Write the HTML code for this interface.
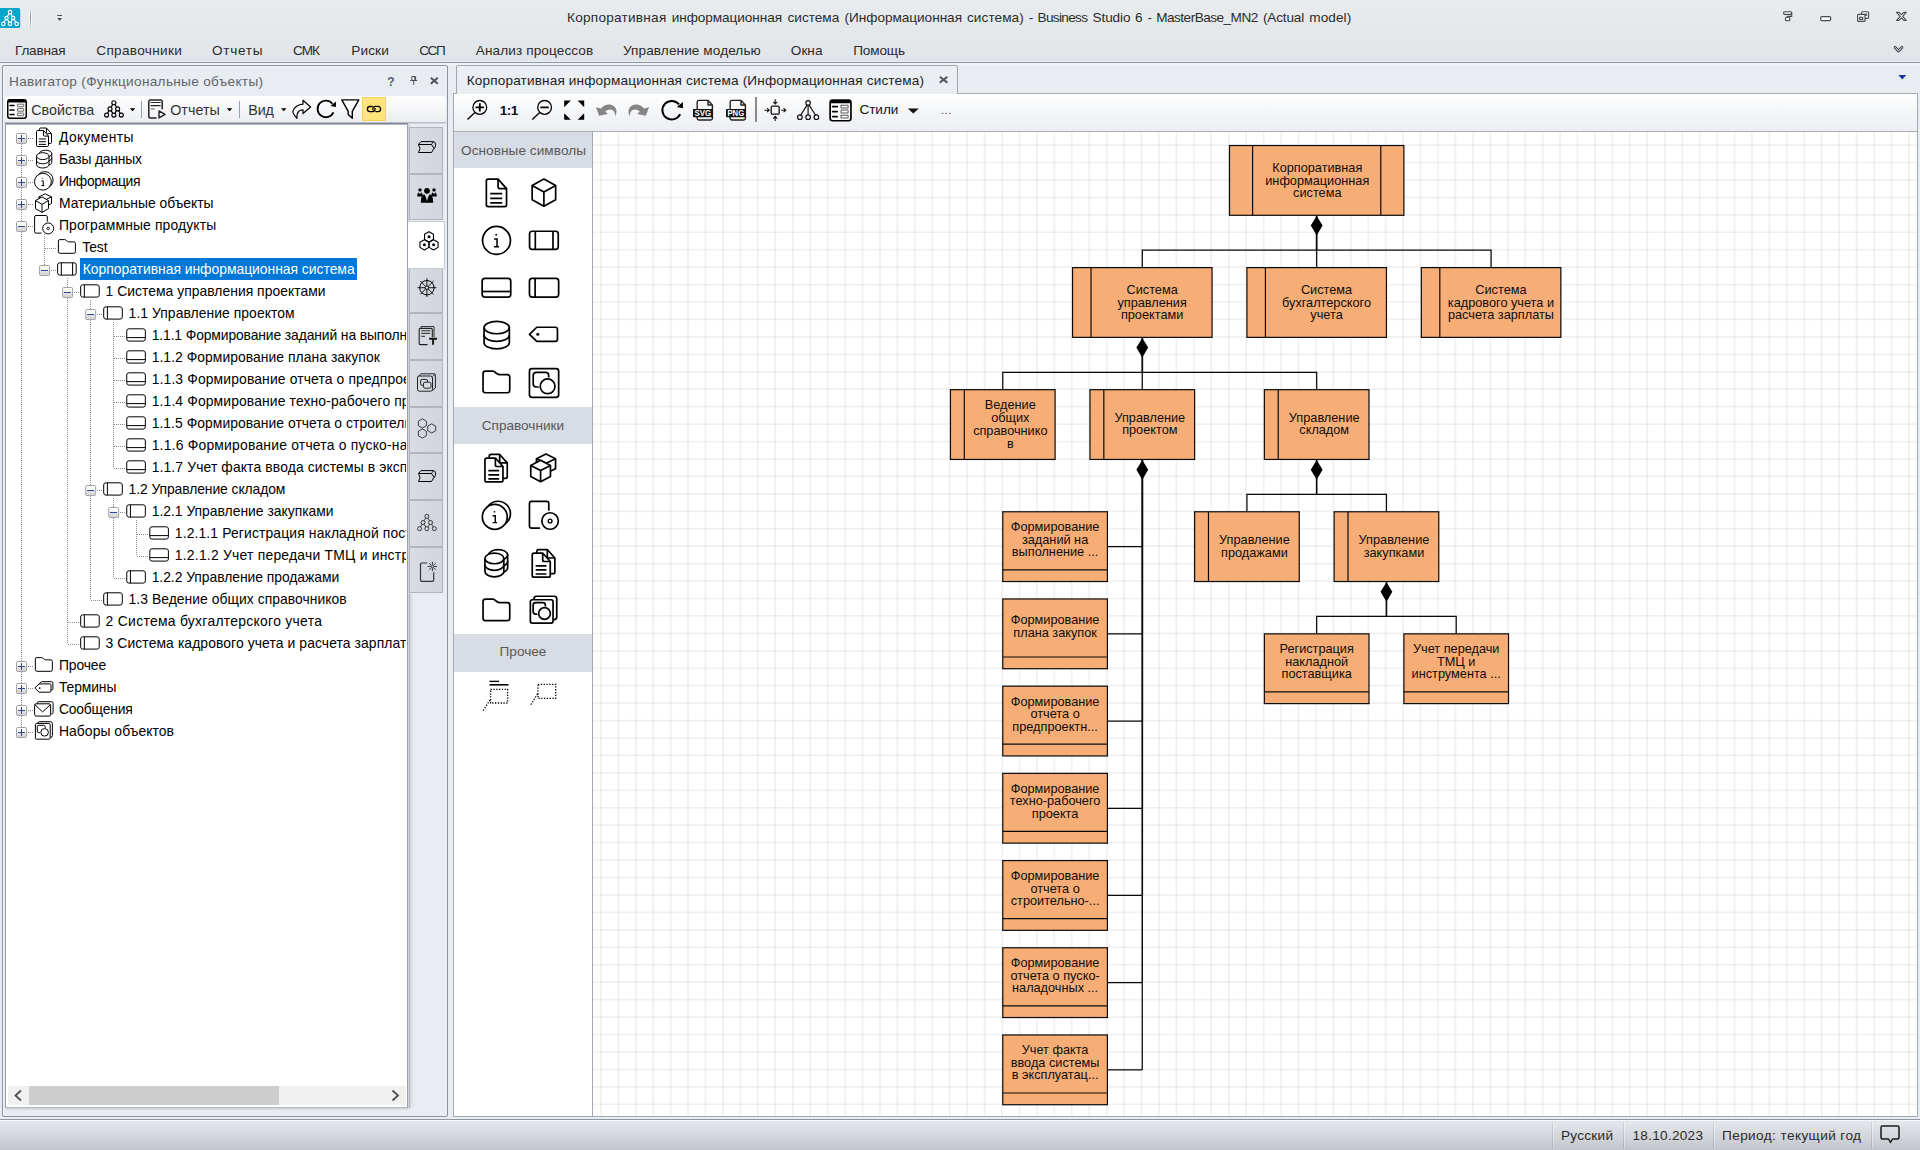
<!DOCTYPE html>
<html lang="ru"><head><meta charset="utf-8"><title>Business Studio</title>
<style>
html,body{margin:0;padding:0}
body{width:1920px;height:1150px;overflow:hidden;position:relative;background:#e9ecf1;font-family:"Liberation Sans",sans-serif;font-size:13.6px;color:#1e1e1e}
body div,body span,body svg{position:absolute;box-sizing:border-box}
span{white-space:pre;line-height:1}
svg{overflow:visible}
.c{overflow:hidden}
</style></head>
<body>
<div style="left:0px;top:0px;width:1920px;height:62px;background:linear-gradient(#e9ecef,#e6e9ec 40%,#e1e4e8)"></div>
<div style="left:0px;top:61px;width:1920px;height:1px;background:#eceff2"></div>
<div style="left:0px;top:62px;width:1920px;height:1px;background:#8d939e"></div>
<div style="left:0px;top:63px;width:1920px;height:2px;background:#f1f4f7"></div>
<svg style="left:0px;top:8px;" width="21" height="20" viewBox="0 0 21 20"><rect x="-3" y="0" width="23.2" height="20" rx="1.8" fill="#05a6cc"/>
<g fill="none" stroke="#fff" stroke-width="1.15">
<path d="M9.2 5.6 L7.3 8.5 M10.8 5.6 L12.4 8.5 M5.7 11.5 L4.1 14.3 M7.4 11.6 L9.2 14.2 M12.3 11.6 L10.8 14.2 M14 11.5 L15.9 14.3"/>
<circle cx="10" cy="4.1" r="1.75"/><circle cx="6.5" cy="10" r="1.65"/><circle cx="13.2" cy="10" r="1.65"/>
<circle cx="3.3" cy="15.8" r="1.75"/><circle cx="10" cy="15.8" r="1.75"/><circle cx="16.7" cy="15.8" r="1.75"/>
</g></svg>
<div style="left:29px;top:7px;width:3px;height:22px;background:linear-gradient(rgba(255,255,255,0),rgba(255,255,255,.8) 50%,rgba(255,255,255,0))"></div>
<div style="left:30px;top:7px;width:1px;height:22px;background:linear-gradient(rgba(140,143,150,0),#8b8e95 45%,#8b8e95 55%,rgba(140,143,150,0))"></div>
<svg style="left:57px;top:15px;" width="6" height="7" viewBox="0 0 6 7"><path d="M0.3 0.5 H5" stroke="#4a4d55" stroke-width="1"/><path d="M0.2 3.1 H5.1 L2.65 5.9 Z" fill="#4a4d55"/></svg>
<span style="left:567.00px;top:11px;letter-spacing:0.249px;color:#2b2b2b;">Корпоративная</span>
<span style="left:671.75px;top:11px;letter-spacing:-0.072px;color:#2b2b2b;">информационная</span>
<span style="left:787.50px;top:11px;letter-spacing:0.003px;color:#2b2b2b;">система</span>
<span style="left:844.50px;top:11px;letter-spacing:-0.028px;color:#2b2b2b;">(Информационная</span>
<span style="left:967.00px;top:11px;letter-spacing:0.069px;color:#2b2b2b;">система)</span>
<span style="left:1028.75px;top:11px;color:#2b2b2b;">-</span>
<span style="left:1037.50px;top:11px;letter-spacing:-0.667px;color:#2b2b2b;">Business</span>
<span style="left:1092.50px;top:11px;letter-spacing:-0.109px;color:#2b2b2b;">Studio</span>
<span style="left:1135.00px;top:11px;color:#2b2b2b;">6</span>
<span style="left:1147.50px;top:11px;color:#2b2b2b;">-</span>
<span style="left:1156.25px;top:11px;letter-spacing:-0.523px;color:#2b2b2b;">MasterBase_MN2</span>
<span style="left:1263.00px;top:11px;letter-spacing:-0.177px;color:#2b2b2b;">(Actual</span>
<span style="left:1309.25px;top:11px;letter-spacing:0.087px;color:#2b2b2b;">model)</span>
<svg style="left:1782px;top:10px;" width="12" height="12" viewBox="0 0 12 12"><g fill="#f6f7f9" stroke="#474b52" stroke-width="1.15"><rect x="1.6" y="1.7" width="8.1" height="2.6" rx="1"/><path d="M9.7 3 V6.4 H5.4 V7.4" fill="none"/><rect x="3.5" y="7.2" width="4.3" height="3.5" rx="1"/></g></svg>
<svg style="left:1819px;top:15px;" width="14" height="7" viewBox="0 0 14 7"><rect x="1.7" y="1.6" width="10" height="4" rx="1.3" fill="#fff" stroke="#474b52" stroke-width="1.2"/></svg>
<svg style="left:1856px;top:10px;" width="14" height="13" viewBox="0 0 14 13"><g fill="#f6f7f9" stroke="#474b52" stroke-width="1.15"><rect x="5.6" y="1.7" width="7" height="6.6" rx="1"/><rect x="9.3" y="4" width="1.4" height="1.3" fill="none" stroke-width="0.9"/><rect x="1.6" y="4.4" width="7.4" height="7" rx="1" fill="#f2f3f6"/><rect x="3.7" y="7.3" width="3" height="2.2" fill="none"/></g></svg>
<svg style="left:1895px;top:11px;" width="13" height="11" viewBox="0 0 13 11"><path d="M1.6 1.3 L3.9 1.3 L6.4 3.7 L8.9 1.3 L11.2 1.3 L7.6 5.3 L11.2 9.3 L8.9 9.3 L6.4 6.9 L3.9 9.3 L1.6 9.3 L5.2 5.3 Z" fill="#fff" stroke="#474b52" stroke-width="1.15" stroke-linejoin="round"/></svg>
<svg style="left:1893px;top:45px;" width="11" height="9" viewBox="0 0 11 9"><path d="M2.2 2.4 L5.5 6 L8.8 2.4" fill="none" stroke="#474b52" stroke-width="2.9" stroke-linejoin="round" stroke-linecap="round"/><path d="M2.3 2.5 L5.5 6 L8.7 2.5" fill="none" stroke="#fff" stroke-width="0.9" stroke-linejoin="round" stroke-linecap="round"/></svg>
<span style="left:15.00px;top:44px;letter-spacing:-0.208px;color:#2b2b2b;">Главная</span>
<span style="left:96.25px;top:44px;letter-spacing:0.314px;color:#2b2b2b;">Справочники</span>
<span style="left:212.00px;top:44px;letter-spacing:0.700px;color:#2b2b2b;">Отчеты</span>
<span style="left:293.00px;top:44px;letter-spacing:-0.961px;color:#2b2b2b;">СМК</span>
<span style="left:351.25px;top:44px;letter-spacing:0.125px;color:#2b2b2b;">Риски</span>
<span style="left:419.25px;top:44px;letter-spacing:-1.453px;color:#2b2b2b;">ССП</span>
<span style="left:475.75px;top:44px;letter-spacing:0.108px;color:#2b2b2b;">Анализ процессов</span>
<span style="left:623.00px;top:44px;letter-spacing:0.091px;color:#2b2b2b;">Управление моделью</span>
<span style="left:790.75px;top:44px;letter-spacing:0.052px;color:#2b2b2b;">Окна</span>
<span style="left:853.25px;top:44px;letter-spacing:-0.153px;color:#2b2b2b;">Помощь</span>
<div style="left:0px;top:1117px;width:1920px;height:2px;background:#e9ecf1"></div>
<div style="left:0px;top:1119px;width:1920px;height:1px;background:#9096a1"></div>
<div style="left:0px;top:1120px;width:1920px;height:1px;background:#f4f7f9"></div>
<div style="left:0px;top:1121px;width:1920px;height:29px;background:linear-gradient(#e4e7eb,#d4d7dc 50%,#c1c4ca)"></div>
<div style="left:1552px;top:1122px;width:1px;height:26px;background:linear-gradient(#d0d3d8,#a9adb4)"></div>
<div style="left:1553px;top:1122px;width:1px;height:26px;background:linear-gradient(#f2f3f5,#dadce0)"></div>
<div style="left:1623px;top:1122px;width:1px;height:26px;background:linear-gradient(#d0d3d8,#a9adb4)"></div>
<div style="left:1624px;top:1122px;width:1px;height:26px;background:linear-gradient(#f2f3f5,#dadce0)"></div>
<div style="left:1713px;top:1122px;width:1px;height:26px;background:linear-gradient(#d0d3d8,#a9adb4)"></div>
<div style="left:1714px;top:1122px;width:1px;height:26px;background:linear-gradient(#f2f3f5,#dadce0)"></div>
<div style="left:1871px;top:1122px;width:1px;height:26px;background:linear-gradient(#d0d3d8,#a9adb4)"></div>
<div style="left:1872px;top:1122px;width:1px;height:26px;background:linear-gradient(#f2f3f5,#dadce0)"></div>
<span style="left:1561.00px;top:1129px;letter-spacing:0.258px;color:#2b2b2b;">Русский</span>
<span style="left:1632.50px;top:1129px;letter-spacing:0.273px;color:#2b2b2b;">18.10.2023</span>
<span style="left:1722.00px;top:1129px;letter-spacing:0.402px;color:#2b2b2b;">Период: текущий год</span>
<svg style="left:1880px;top:1125px;" width="20" height="19" viewBox="0 0 20 19"><path d="M2.5 1 H17.5 Q19 1 19 2.5 V12.5 Q19 14 17.5 14 H12.5 L10.5 17.5 L8.5 14 H2.5 Q1 14 1 12.5 V2.5 Q1 1 2.5 1 Z" fill="none" stroke="#1a1a1a" stroke-width="1.5" stroke-linejoin="round"/></svg>
<div style="left:2px;top:65px;width:446px;height:1052px;border:1px solid #8d939e;border-radius:2px;background:#e9ecf1;box-shadow:inset 1px 1px 0 #f1f4f7"></div>
<span style="left:9.00px;top:75px;letter-spacing:0.321px;color:#5f6570;">Навигатор (Функциональные объекты)</span>
<span style="left:387.30px;top:76px;font-size:12px;color:#5a5f68;font-weight:700;">?</span>
<svg style="left:409.5px;top:76px;" width="8" height="9" viewBox="0 0 8 9"><path d="M1.9 0.5 H5.6 V4.4 M1.9 0.5 V4.4 M0.2 4.5 H7.2 M3.7 4.5 V8.8" fill="none" stroke="#4a4f58" stroke-width="1"/><path d="M4.9 0.8 V4.2" stroke="#4a4f58" stroke-width="1.2"/></svg>
<svg style="left:430px;top:76.5px;" width="9" height="8" viewBox="0 0 9 8"><path d="M0.8 0.8 L7.8 6.8 M7.8 0.8 L0.8 6.8" fill="none" stroke="#4a4f58" stroke-width="1.9"/></svg>
<div style="left:5px;top:96px;width:441px;height:26px;background:linear-gradient(#ffffff,#f6f7f9 45%,#eceef2);border-radius:3px 4px 4px 3px;box-shadow:0 1px 0 #d9dce2"></div>
<span style="left:31.25px;top:103px;font-size:14.3px;letter-spacing:0.031px;color:#333;">Свойства</span>
<div style="left:141px;top:101px;width:1px;height:17px;background:#8d9ec0"></div>
<span style="left:170.20px;top:103px;font-size:14.3px;letter-spacing:0.036px;color:#333;">Отчеты</span>
<div style="left:239px;top:101px;width:1px;height:17px;background:#8d9ec0"></div>
<span style="left:248.30px;top:103px;font-size:14.3px;letter-spacing:-0.137px;color:#333;">Вид</span>
<div style="left:362px;top:97px;width:24px;height:24px;background:#ffe57a;border:1px solid #f3d260"></div>
<div style="left:5px;top:122px;width:441px;height:1px;background:#b9bec7"></div>
<div style="left:5px;top:123px;width:441px;height:1px;background:#d3d7dd"></div>
<div style="left:5px;top:123px;width:403px;height:985px;background:#fff;border:1px solid #9ba1ab;border-top-color:#7f8590;border-left-color:#9aa0aa;border-bottom-color:#b4b9c2;box-shadow:1px 1px 2px rgba(120,125,135,.35),inset 0 1px 0 #b4b9c3"></div>
<div class="c" style="left:6px;top:124px;width:400px;height:962px">
<div style="left:74px;top:134.3px;width:277px;height:21.7px;background:#0078d7"></div>
<span style="left:53.00px;top:7px;font-size:13.9px;letter-spacing:0.349px;color:#000;">Документы</span>
<span style="left:53.00px;top:29px;font-size:13.9px;letter-spacing:-0.200px;color:#000;">Базы данных</span>
<span style="left:53.00px;top:51px;font-size:13.9px;letter-spacing:-0.394px;color:#000;">Информация</span>
<span style="left:53.00px;top:73px;font-size:13.9px;letter-spacing:-0.030px;color:#000;">Материальные объекты</span>
<span style="left:53.00px;top:95px;font-size:13.9px;letter-spacing:0.137px;color:#000;">Программные продукты</span>
<span style="left:76.30px;top:117px;font-size:13.9px;letter-spacing:-0.061px;color:#000;">Test</span>
<span style="left:76.80px;top:139px;font-size:13.9px;letter-spacing:-0.021px;color:#fff;">Корпоративная информационная система</span>
<span style="left:99.60px;top:161px;font-size:13.9px;letter-spacing:0.025px;color:#000;">1 Система управления проектами</span>
<span style="left:122.60px;top:183px;font-size:13.9px;letter-spacing:0.060px;color:#000;">1.1 Управление проектом</span>
<span style="left:145.70px;top:205px;font-size:13.9px;letter-spacing:-0.123px;color:#000;">1.1.1 Формирование заданий на выполнение работ</span>
<span style="left:145.70px;top:227px;font-size:13.9px;letter-spacing:0.045px;color:#000;">1.1.2 Формирование плана закупок</span>
<span style="left:145.70px;top:249px;font-size:13.9px;letter-spacing:0.129px;color:#000;">1.1.3 Формирование отчета о предпроектном обследовании</span>
<span style="left:145.70px;top:271px;font-size:13.9px;letter-spacing:0.127px;color:#000;">1.1.4 Формирование техно-рабочего проекта</span>
<span style="left:145.70px;top:293px;font-size:13.9px;letter-spacing:0.042px;color:#000;">1.1.5 Формирование отчета о строительно-монтажных работах</span>
<span style="left:145.70px;top:315px;font-size:13.9px;letter-spacing:0.211px;color:#000;">1.1.6 Формирование отчета о пуско-наладочных работах</span>
<span style="left:145.70px;top:337px;font-size:13.9px;letter-spacing:0.125px;color:#000;">1.1.7 Учет факта ввода системы в эксплуатацию</span>
<span style="left:122.60px;top:359px;font-size:13.9px;letter-spacing:-0.088px;color:#000;">1.2 Управление складом</span>
<span style="left:145.70px;top:381px;font-size:13.9px;letter-spacing:-0.006px;color:#000;">1.2.1 Управление закупками</span>
<span style="left:168.80px;top:403px;font-size:13.9px;letter-spacing:0.133px;color:#000;">1.2.1.1 Регистрация накладной поставщика</span>
<span style="left:168.80px;top:425px;font-size:13.9px;letter-spacing:0.231px;color:#000;">1.2.1.2 Учет передачи ТМЦ и инструмента</span>
<span style="left:145.70px;top:447px;font-size:13.9px;letter-spacing:-0.046px;color:#000;">1.2.2 Управление продажами</span>
<span style="left:122.60px;top:469px;font-size:13.9px;letter-spacing:0.040px;color:#000;">1.3 Ведение общих справочников</span>
<span style="left:99.60px;top:491px;font-size:13.9px;letter-spacing:0.293px;color:#000;">2 Система бухгалтерского учета</span>
<span style="left:99.60px;top:513px;font-size:13.9px;letter-spacing:0.090px;color:#000;">3 Система кадрового учета и расчета зарплаты</span>
<span style="left:53.00px;top:535px;font-size:13.9px;letter-spacing:-0.126px;color:#000;">Прочее</span>
<span style="left:53.00px;top:557px;font-size:13.9px;letter-spacing:-0.121px;color:#000;">Термины</span>
<span style="left:53.00px;top:579px;font-size:13.9px;letter-spacing:-0.211px;color:#000;">Сообщения</span>
<span style="left:53.00px;top:601px;font-size:13.9px;letter-spacing:0.051px;color:#000;">Наборы объектов</span>
</div>
<div style="left:8px;top:1086px;width:398px;height:19px;background:#f0f0f0"></div>
<div style="left:29px;top:1086px;width:250px;height:19px;background:#cdcdcd"></div>
<div style="left:409px;top:127px;width:34px;height:47px;background:linear-gradient(90deg,#d9dce2,#d2d6dc);border:1px solid #b0b5bf"></div>
<div style="left:409px;top:174px;width:34px;height:46px;background:linear-gradient(90deg,#d9dce2,#d2d6dc);border:1px solid #b0b5bf"></div>
<div style="left:409px;top:267px;width:34px;height:46px;background:linear-gradient(90deg,#d9dce2,#d2d6dc);border:1px solid #b0b5bf"></div>
<div style="left:409px;top:313px;width:34px;height:47px;background:linear-gradient(90deg,#d9dce2,#d2d6dc);border:1px solid #b0b5bf"></div>
<div style="left:409px;top:360px;width:34px;height:47px;background:linear-gradient(90deg,#d9dce2,#d2d6dc);border:1px solid #b0b5bf"></div>
<div style="left:409px;top:407px;width:34px;height:46px;background:linear-gradient(90deg,#d9dce2,#d2d6dc);border:1px solid #b0b5bf"></div>
<div style="left:409px;top:453px;width:34px;height:47px;background:linear-gradient(90deg,#d9dce2,#d2d6dc);border:1px solid #b0b5bf"></div>
<div style="left:409px;top:500px;width:34px;height:47px;background:linear-gradient(90deg,#d9dce2,#d2d6dc);border:1px solid #b0b5bf"></div>
<div style="left:409px;top:547px;width:34px;height:46px;background:linear-gradient(90deg,#d9dce2,#d2d6dc);border:1px solid #b0b5bf"></div>
<div style="left:408px;top:221px;width:37px;height:48px;background:#fff;border:1px solid #c9cdd4;border-left:none"></div>
<div style="left:409px;top:594px;width:1px;height:514px;background:#b4b9c3"></div>
<div style="left:410px;top:594px;width:4px;height:514px;background:linear-gradient(90deg,#d3d7dd,#e9ecf1)"></div>
<div style="left:456px;top:65px;width:502px;height:30px;background:linear-gradient(#eceff3,#e9ecf1);border:1px solid #a0a6b1;border-bottom:none;border-radius:2px 2px 0 0"></div>
<span style="left:466.80px;top:74px;letter-spacing:0.146px;">Корпоративная информационная система (Информационная система)</span>
<svg style="left:939px;top:76px;" width="10" height="8" viewBox="0 0 10 8"><path d="M0.8 0.8 L8.4 6.6 M8.4 0.8 L0.8 6.6" fill="none" stroke="#555a62" stroke-width="2"/></svg>
<svg style="left:1898px;top:75px;" width="9" height="5" viewBox="0 0 9 5"><path d="M0.3 0 H8.3 L4.3 4.6 Z" fill="#1b36a2"/></svg>
<div style="left:453px;top:93px;width:1465px;height:1024px;border:1px solid #a3a9b4;background:#fff"></div>
<div style="left:454px;top:94px;width:1463px;height:37px;background:linear-gradient(#ffffff,#f6f7f9 40%,#eceef2)"></div>
<div style="left:454px;top:131px;width:1463px;height:1px;background:#a9aeb8"></div>
<div style="left:457px;top:93px;width:500px;height:1px;background:#e9ecf1"></div>
<span style="left:499.80px;top:104px;letter-spacing:-0.628px;color:#111;font-weight:700;">1:1</span>
<div style="left:755px;top:97px;width:2px;height:25px;background:#8a8a8a"></div>
<span style="left:859.40px;top:103px;letter-spacing:-0.043px;color:#111;">Стили</span>
<span style="left:941.00px;top:105px;font-size:11px;letter-spacing:0.514px;color:#444;">...</span>
<div style="left:454px;top:132px;width:138px;height:984px;background:#fff"></div>
<div style="left:592px;top:132px;width:1px;height:984px;background:#a3a9b4"></div>
<div style="left:454px;top:132px;width:138px;height:36px;background:#d8dce5"></div>
<span style="left:461.00px;top:144px;letter-spacing:0.064px;color:#585858;">Основные символы</span>
<div style="left:454px;top:407px;width:138px;height:36.5px;background:#d8dce5"></div>
<span style="left:481.80px;top:419px;letter-spacing:-0.016px;color:#585858;">Справочники</span>
<div style="left:454px;top:634px;width:138px;height:37.7px;background:#d8dce5"></div>
<span style="left:499.60px;top:645px;letter-spacing:-0.019px;color:#585858;">Прочее</span>
<svg style="left:0;top:0" width="1920" height="1150" viewBox="0 0 1920 1150"><path d="M600.90 132V1116M618.34 132V1116M635.78 132V1116M653.22 132V1116M670.66 132V1116M688.10 132V1116M705.54 132V1116M722.98 132V1116M740.42 132V1116M757.86 132V1116M775.30 132V1116M792.74 132V1116M810.18 132V1116M827.62 132V1116M845.06 132V1116M862.50 132V1116M879.94 132V1116M897.38 132V1116M914.82 132V1116M932.26 132V1116M949.70 132V1116M967.14 132V1116M984.58 132V1116M1002.02 132V1116M1019.46 132V1116M1036.90 132V1116M1054.34 132V1116M1071.78 132V1116M1089.22 132V1116M1106.66 132V1116M1124.10 132V1116M1141.54 132V1116M1158.98 132V1116M1176.42 132V1116M1193.86 132V1116M1211.30 132V1116M1228.74 132V1116M1246.18 132V1116M1263.62 132V1116M1281.06 132V1116M1298.50 132V1116M1315.94 132V1116M1333.38 132V1116M1350.82 132V1116M1368.26 132V1116M1385.70 132V1116M1403.14 132V1116M1420.58 132V1116M1438.02 132V1116M1455.46 132V1116M1472.90 132V1116M1490.34 132V1116M1507.78 132V1116M1525.22 132V1116M1542.66 132V1116M1560.10 132V1116M1577.54 132V1116M1594.98 132V1116M1612.42 132V1116M1629.86 132V1116M1647.30 132V1116M1664.74 132V1116M1682.18 132V1116M1699.62 132V1116M1717.06 132V1116M1734.50 132V1116M1751.94 132V1116M1769.38 132V1116M1786.82 132V1116M1804.26 132V1116M1821.70 132V1116M1839.14 132V1116M1856.58 132V1116M1874.02 132V1116M1891.46 132V1116M1908.90 132V1116" fill="none" stroke="#000" stroke-opacity=".06" stroke-width="1.7"/><path d="M593 145.06H1917M593 162.50H1917M593 179.94H1917M593 197.38H1917M593 214.82H1917M593 232.26H1917M593 249.70H1917M593 267.14H1917M593 284.58H1917M593 302.02H1917M593 319.46H1917M593 336.90H1917M593 354.34H1917M593 371.78H1917M593 389.22H1917M593 406.66H1917M593 424.10H1917M593 441.54H1917M593 458.98H1917M593 476.42H1917M593 493.86H1917M593 511.30H1917M593 528.74H1917M593 546.18H1917M593 563.62H1917M593 581.06H1917M593 598.50H1917M593 615.94H1917M593 633.38H1917M593 650.82H1917M593 668.26H1917M593 685.70H1917M593 703.14H1917M593 720.58H1917M593 738.02H1917M593 755.46H1917M593 772.90H1917M593 790.34H1917M593 807.78H1917M593 825.22H1917M593 842.66H1917M593 860.10H1917M593 877.54H1917M593 894.98H1917M593 912.42H1917M593 929.86H1917M593 947.30H1917M593 964.74H1917M593 982.18H1917M593 999.62H1917M593 1017.06H1917M593 1034.50H1917M593 1051.94H1917M593 1069.38H1917M593 1086.82H1917M593 1104.26H1917" fill="none" stroke="#000" stroke-opacity=".06" stroke-width="1.7"/><path d="M1316.69 215.29 L1316.69 250.17" fill="none" stroke="#0a0a0a" stroke-width="1.75"/><path d="M1316.69 250.17 L1316.69 267.61" fill="none" stroke="#0a0a0a" stroke-width="1.25"/><path d="M1142.29 267.61 L1142.29 250.17 L1491.09 250.17 L1491.09 267.61" fill="none" stroke="#0a0a0a" stroke-width="1.25"/><path d="M1142.29 337.37 L1142.29 372.25" fill="none" stroke="#0a0a0a" stroke-width="1.75"/><path d="M1142.29 372.25 L1142.29 389.69" fill="none" stroke="#0a0a0a" stroke-width="1.25"/><path d="M1002.77 389.69 L1002.77 372.25 L1316.69 372.25 L1316.69 389.69" fill="none" stroke="#0a0a0a" stroke-width="1.25"/><path d="M1142.29 459.45 L1142.29 546.65" fill="none" stroke="#0a0a0a" stroke-width="2.0"/><path d="M1142.29 546.65 L1142.29 633.85" fill="none" stroke="#0a0a0a" stroke-width="1.9"/><path d="M1142.29 633.85 L1142.29 721.05" fill="none" stroke="#0a0a0a" stroke-width="1.8"/><path d="M1142.29 721.05 L1142.29 808.25" fill="none" stroke="#0a0a0a" stroke-width="1.7"/><path d="M1142.29 808.25 L1142.29 895.45" fill="none" stroke="#0a0a0a" stroke-width="1.6"/><path d="M1142.29 895.45 L1142.29 982.65" fill="none" stroke="#0a0a0a" stroke-width="1.45"/><path d="M1142.29 982.65 L1142.29 1069.85" fill="none" stroke="#0a0a0a" stroke-width="1.25"/><path d="M1107.41 546.65 L1142.29 546.65" fill="none" stroke="#0a0a0a" stroke-width="1.25"/><path d="M1107.41 633.85 L1142.29 633.85" fill="none" stroke="#0a0a0a" stroke-width="1.25"/><path d="M1107.41 721.05 L1142.29 721.05" fill="none" stroke="#0a0a0a" stroke-width="1.25"/><path d="M1107.41 808.25 L1142.29 808.25" fill="none" stroke="#0a0a0a" stroke-width="1.25"/><path d="M1107.41 895.45 L1142.29 895.45" fill="none" stroke="#0a0a0a" stroke-width="1.25"/><path d="M1107.41 982.65 L1142.29 982.65" fill="none" stroke="#0a0a0a" stroke-width="1.25"/><path d="M1107.41 1069.85 L1142.29 1069.85" fill="none" stroke="#0a0a0a" stroke-width="1.25"/><path d="M1316.69 459.45 L1316.69 494.33" fill="none" stroke="#0a0a0a" stroke-width="1.6"/><path d="M1246.93 511.77 L1246.93 494.33 L1386.45 494.33 L1386.45 511.77" fill="none" stroke="#0a0a0a" stroke-width="1.25"/><path d="M1386.45 581.53 L1386.45 616.41" fill="none" stroke="#0a0a0a" stroke-width="1.6"/><path d="M1316.69 633.85 L1316.69 616.41 L1456.21 616.41 L1456.21 633.85" fill="none" stroke="#0a0a0a" stroke-width="1.25"/><rect x="1229.49" y="145.53" width="174.40" height="69.76" fill="#f7ae76" stroke="#0a0a0a" stroke-width="1.2"/><path d="M1252.60 145.53V215.29" stroke="#0a0a0a" stroke-width="1.2"/><path d="M1380.78 145.53V215.29" stroke="#0a0a0a" stroke-width="1.2"/><rect x="1072.53" y="267.61" width="139.52" height="69.76" fill="#f7ae76" stroke="#0a0a0a" stroke-width="1.2"/><path d="M1091.02 267.61V337.37" stroke="#0a0a0a" stroke-width="1.2"/><rect x="1246.93" y="267.61" width="139.52" height="69.76" fill="#f7ae76" stroke="#0a0a0a" stroke-width="1.2"/><path d="M1265.42 267.61V337.37" stroke="#0a0a0a" stroke-width="1.2"/><rect x="1421.33" y="267.61" width="139.52" height="69.76" fill="#f7ae76" stroke="#0a0a0a" stroke-width="1.2"/><path d="M1439.82 267.61V337.37" stroke="#0a0a0a" stroke-width="1.2"/><rect x="950.45" y="389.69" width="104.64" height="69.76" fill="#f7ae76" stroke="#0a0a0a" stroke-width="1.2"/><path d="M964.31 389.69V459.45" stroke="#0a0a0a" stroke-width="1.2"/><rect x="1089.97" y="389.69" width="104.64" height="69.76" fill="#f7ae76" stroke="#0a0a0a" stroke-width="1.2"/><path d="M1103.83 389.69V459.45" stroke="#0a0a0a" stroke-width="1.2"/><rect x="1264.37" y="389.69" width="104.64" height="69.76" fill="#f7ae76" stroke="#0a0a0a" stroke-width="1.2"/><path d="M1278.23 389.69V459.45" stroke="#0a0a0a" stroke-width="1.2"/><rect x="1002.77" y="511.77" width="104.64" height="69.76" fill="#f7ae76" stroke="#0a0a0a" stroke-width="1.2"/><path d="M1002.77 569.81H1107.41" stroke="#0a0a0a" stroke-width="1.2"/><rect x="1002.77" y="598.97" width="104.64" height="69.76" fill="#f7ae76" stroke="#0a0a0a" stroke-width="1.2"/><path d="M1002.77 657.01H1107.41" stroke="#0a0a0a" stroke-width="1.2"/><rect x="1002.77" y="686.17" width="104.64" height="69.76" fill="#f7ae76" stroke="#0a0a0a" stroke-width="1.2"/><path d="M1002.77 744.21H1107.41" stroke="#0a0a0a" stroke-width="1.2"/><rect x="1002.77" y="773.37" width="104.64" height="69.76" fill="#f7ae76" stroke="#0a0a0a" stroke-width="1.2"/><path d="M1002.77 831.41H1107.41" stroke="#0a0a0a" stroke-width="1.2"/><rect x="1002.77" y="860.57" width="104.64" height="69.76" fill="#f7ae76" stroke="#0a0a0a" stroke-width="1.2"/><path d="M1002.77 918.61H1107.41" stroke="#0a0a0a" stroke-width="1.2"/><rect x="1002.77" y="947.77" width="104.64" height="69.76" fill="#f7ae76" stroke="#0a0a0a" stroke-width="1.2"/><path d="M1002.77 1005.81H1107.41" stroke="#0a0a0a" stroke-width="1.2"/><rect x="1002.77" y="1034.97" width="104.64" height="69.76" fill="#f7ae76" stroke="#0a0a0a" stroke-width="1.2"/><path d="M1002.77 1093.01H1107.41" stroke="#0a0a0a" stroke-width="1.2"/><rect x="1194.61" y="511.77" width="104.64" height="69.76" fill="#f7ae76" stroke="#0a0a0a" stroke-width="1.2"/><path d="M1208.47 511.77V581.53" stroke="#0a0a0a" stroke-width="1.2"/><rect x="1334.13" y="511.77" width="104.64" height="69.76" fill="#f7ae76" stroke="#0a0a0a" stroke-width="1.2"/><path d="M1347.99 511.77V581.53" stroke="#0a0a0a" stroke-width="1.2"/><rect x="1264.37" y="633.85" width="104.64" height="69.76" fill="#f7ae76" stroke="#0a0a0a" stroke-width="1.2"/><path d="M1264.37 691.89H1369.01" stroke="#0a0a0a" stroke-width="1.2"/><rect x="1403.89" y="633.85" width="104.64" height="69.76" fill="#f7ae76" stroke="#0a0a0a" stroke-width="1.2"/><path d="M1403.89 691.89H1508.53" stroke="#0a0a0a" stroke-width="1.2"/><path d="M1316.69 215.89L1322.59 225.49L1316.69 235.49L1310.79 225.49Z" fill="#000"/><path d="M1142.29 337.97L1148.19 347.57L1142.29 357.57L1136.39 347.57Z" fill="#000"/><path d="M1142.29 460.05L1148.19 469.65L1142.29 479.65L1136.39 469.65Z" fill="#000"/><path d="M1316.69 460.05L1322.59 469.65L1316.69 479.65L1310.79 469.65Z" fill="#000"/><path d="M1386.45 582.13L1392.35 591.73L1386.45 601.73L1380.55 591.73Z" fill="#000"/></svg>
<span style="left:1272.26px;top:162px;font-size:12.72px;color:#0d0d0d;">Корпоративная</span>
<span style="left:1265.27px;top:175px;font-size:12.72px;color:#0d0d0d;">информационная</span>
<span style="left:1293.09px;top:187px;font-size:12.72px;color:#0d0d0d;">система</span>
<span style="left:1126.52px;top:284px;font-size:12.72px;color:#0d0d0d;">Система</span>
<span style="left:1117.45px;top:297px;font-size:12.72px;color:#0d0d0d;">управления</span>
<span style="left:1120.92px;top:309px;font-size:12.72px;color:#0d0d0d;">проектами</span>
<span style="left:1300.92px;top:284px;font-size:12.72px;color:#0d0d0d;">Система</span>
<span style="left:1282.04px;top:297px;font-size:12.72px;color:#0d0d0d;">бухгалтерского</span>
<span style="left:1310.33px;top:309px;font-size:12.72px;color:#0d0d0d;">учета</span>
<span style="left:1475.32px;top:284px;font-size:12.72px;color:#0d0d0d;">Система</span>
<span style="left:1447.85px;top:297px;font-size:12.72px;color:#0d0d0d;">кадрового учета и</span>
<span style="left:1447.94px;top:309px;font-size:12.72px;color:#0d0d0d;">расчета зарплаты</span>
<span style="left:984.81px;top:399px;font-size:12.72px;color:#0d0d0d;">Ведение</span>
<span style="left:991.15px;top:412px;font-size:12.72px;color:#0d0d0d;">общих</span>
<span style="left:973.13px;top:425px;font-size:12.72px;color:#0d0d0d;">справочнико</span>
<span style="left:1006.92px;top:438px;font-size:12.72px;color:#0d0d0d;">в</span>
<span style="left:1114.46px;top:412px;font-size:12.72px;color:#0d0d0d;">Управление</span>
<span style="left:1122.16px;top:424px;font-size:12.72px;color:#0d0d0d;">проектом</span>
<span style="left:1288.86px;top:412px;font-size:12.72px;color:#0d0d0d;">Управление</span>
<span style="left:1299.32px;top:424px;font-size:12.72px;color:#0d0d0d;">складом</span>
<span style="left:1010.74px;top:521px;font-size:12.72px;color:#0d0d0d;">Формирование</span>
<span style="left:1021.96px;top:534px;font-size:12.72px;color:#0d0d0d;">заданий на</span>
<span style="left:1011.87px;top:546px;font-size:12.72px;color:#0d0d0d;">выполнение ...</span>
<span style="left:1010.74px;top:614px;font-size:12.72px;color:#0d0d0d;">Формирование</span>
<span style="left:1013.33px;top:627px;font-size:12.72px;color:#0d0d0d;">плана закупок</span>
<span style="left:1010.74px;top:696px;font-size:12.72px;color:#0d0d0d;">Формирование</span>
<span style="left:1030.46px;top:708px;font-size:12.72px;color:#0d0d0d;">отчета о</span>
<span style="left:1012.36px;top:721px;font-size:12.72px;color:#0d0d0d;">предпроектн...</span>
<span style="left:1010.74px;top:783px;font-size:12.72px;color:#0d0d0d;">Формирование</span>
<span style="left:1009.82px;top:795px;font-size:12.72px;color:#0d0d0d;">техно-рабочего</span>
<span style="left:1031.80px;top:808px;font-size:12.72px;color:#0d0d0d;">проекта</span>
<span style="left:1010.74px;top:870px;font-size:12.72px;color:#0d0d0d;">Формирование</span>
<span style="left:1030.46px;top:883px;font-size:12.72px;color:#0d0d0d;">отчета о</span>
<span style="left:1010.71px;top:895px;font-size:12.72px;color:#0d0d0d;">строительно-...</span>
<span style="left:1010.74px;top:957px;font-size:12.72px;color:#0d0d0d;">Формирование</span>
<span style="left:1010.45px;top:970px;font-size:12.72px;color:#0d0d0d;">отчета о пуско-</span>
<span style="left:1012.04px;top:982px;font-size:12.72px;color:#0d0d0d;">наладочных ...</span>
<span style="left:1021.73px;top:1044px;font-size:12.72px;color:#0d0d0d;">Учет факта</span>
<span style="left:1010.75px;top:1057px;font-size:12.72px;color:#0d0d0d;">ввода системы</span>
<span style="left:1011.68px;top:1069px;font-size:12.72px;color:#0d0d0d;">в эксплуатац...</span>
<span style="left:1219.10px;top:534px;font-size:12.72px;color:#0d0d0d;">Управление</span>
<span style="left:1221.12px;top:547px;font-size:12.72px;color:#0d0d0d;">продажами</span>
<span style="left:1358.62px;top:534px;font-size:12.72px;color:#0d0d0d;">Управление</span>
<span style="left:1363.66px;top:547px;font-size:12.72px;color:#0d0d0d;">закупками</span>
<span style="left:1279.51px;top:643px;font-size:12.72px;color:#0d0d0d;">Регистрация</span>
<span style="left:1285.22px;top:656px;font-size:12.72px;color:#0d0d0d;">накладной</span>
<span style="left:1281.53px;top:668px;font-size:12.72px;color:#0d0d0d;">поставщика</span>
<span style="left:1412.96px;top:643px;font-size:12.72px;color:#0d0d0d;">Учет передачи</span>
<span style="left:1437.00px;top:656px;font-size:12.72px;color:#0d0d0d;">ТМЦ и</span>
<span style="left:1411.61px;top:668px;font-size:12.72px;color:#0d0d0d;">инструмента ...</span>
<svg style="left:0;top:0" width="1920" height="1150" viewBox="0 0 1920 1150"><rect x="7.75" y="99.75" width="18.5" height="18.5" rx="2.2" fill="#fdfdfd" stroke="#000" stroke-width="1.5"/><path d="M8 102.6 V101.6 Q8 99.6 10 99.6 H24 Q26 99.6 26 101.6 V102.6 Z" fill="#000" stroke="#000" stroke-width="0" /><path d="M10 105.5 H14" fill="none" stroke="#000" stroke-width="1.5" stroke-linecap="round"/><rect x="17.4" y="104.2" width="6.3" height="2.6" rx="0.3" fill="#fff" stroke="#555" stroke-width="0.9"/><path d="M10 109.9 H14" fill="none" stroke="#000" stroke-width="1.5" stroke-linecap="round"/><rect x="17.4" y="108.6" width="6.3" height="2.6" rx="0.3" fill="#fff" stroke="#555" stroke-width="0.9"/><path d="M10 114.4 H14" fill="none" stroke="#000" stroke-width="1.5" stroke-linecap="round"/><rect x="17.4" y="113.1" width="6.3" height="2.6" rx="0.3" fill="#fff" stroke="#555" stroke-width="0.9"/><path d="M112.79 104.4 L111.06 107.2 M114.89 104.41 L116.56 107.19 M109.04 110.65 L107.56 113.35 M111.06 110.6 L112.79 113.4 M116.56 110.61 L114.89 113.39 M118.62 110.62 L120.28 113.38" fill="none" stroke="#000" stroke-width="1.15" /><circle cx="113.85" cy="102.7" r="2" fill="none" stroke="#000" stroke-width="1.15"/><circle cx="110" cy="108.9" r="2" fill="none" stroke="#000" stroke-width="1.15"/><circle cx="117.6" cy="108.9" r="2" fill="none" stroke="#000" stroke-width="1.15"/><circle cx="106.6" cy="115.1" r="2" fill="none" stroke="#000" stroke-width="1.15"/><circle cx="113.85" cy="115.1" r="2" fill="none" stroke="#000" stroke-width="1.15"/><circle cx="121.3" cy="115.1" r="2" fill="none" stroke="#000" stroke-width="1.15"/><path d="M129.8 108.2 H135.3 L132.55 111.2 Z" fill="#000" stroke="#000" stroke-width="0" /><path d="M162.2 108.8 V101.6 Q162.2 100.1 160.7 100.1 H150.3 Q148.8 100.1 148.8 101.6 V116.4 Q148.8 117.9 150.3 117.9 H156" fill="none" stroke="#222" stroke-width="1.5" stroke-linecap="round"/><path d="M150.6 102.5 H160.6 M150.6 105.6 H160.6" fill="none" stroke="#222" stroke-width="1.2" /><path d="M150.6 108.9 H154.8" fill="none" stroke="#777" stroke-width="1.2" /><path d="M159 110.9 L165 114.4 L159 117.9 Z" fill="none" stroke="#222" stroke-width="1.4" stroke-linejoin="round"/><path d="M226.8 108.2 H232.3 L229.55 111.2 Z" fill="#000" stroke="#000" stroke-width="0" /><path d="M281 108.2 H286.5 L283.75 111.2 Z" fill="#000" stroke="#000" stroke-width="0" /><path d="M303 104.2 V100.3 L310.6 107 L303 113.5 V109.9 C299.5 109.9 296.6 111.6 297 118.3 C294 115.3 292.6 112.8 293 111.2 C294 107.3 298.2 104.4 303 104.2 Z" fill="none" stroke="#000" stroke-width="1.2" stroke-linejoin="round"/><path d="M332.44 103.79 A8.3 8.3 0 1 0 333.42 112.41" fill="none" stroke="#000" stroke-width="1.8" /><path d="M335.91 101.57 L335.91 107.07 L330.51 106.01 Z" fill="#000" stroke="#000" stroke-width="0" /><path d="M341.8 99.9 H358.8 L352.3 111.3 V118.3 L348.2 114.6 V111.3 Z" fill="none" stroke="#000" stroke-width="1.4" stroke-linejoin="round"/><path d="M372.2 106.5 H370 A2.6 2.6 0 0 0 370 111.7 H372.6 A2.6 2.6 0 0 0 375 108.3 M375.8 111.6 H378 A2.6 2.6 0 0 0 378 106.4 H375.4 A2.6 2.6 0 0 0 373 109.8" fill="none" stroke="#000" stroke-width="1.3" stroke-linecap="round"/><path d="M21.5 137.5 V732" fill="none" stroke="#8c8c8c" stroke-width="1" stroke-dasharray="1 1" shape-rendering="crispEdges"/><path d="M44.55 233.5 V270" fill="none" stroke="#8c8c8c" stroke-width="1" stroke-dasharray="1 1" shape-rendering="crispEdges"/><path d="M67.6 277.5 V644" fill="none" stroke="#8c8c8c" stroke-width="1" stroke-dasharray="1 1" shape-rendering="crispEdges"/><path d="M90.65 299.5 V600" fill="none" stroke="#8c8c8c" stroke-width="1" stroke-dasharray="1 1" shape-rendering="crispEdges"/><path d="M113.7 321.5 V468" fill="none" stroke="#8c8c8c" stroke-width="1" stroke-dasharray="1 1" shape-rendering="crispEdges"/><path d="M113.7 497.5 V578" fill="none" stroke="#8c8c8c" stroke-width="1" stroke-dasharray="1 1" shape-rendering="crispEdges"/><path d="M136.75 519.5 V556" fill="none" stroke="#8c8c8c" stroke-width="1" stroke-dasharray="1 1" shape-rendering="crispEdges"/><path d="M27.5 138 H33" fill="none" stroke="#8c8c8c" stroke-width="1" stroke-dasharray="1 1" shape-rendering="crispEdges"/><path d="M27.5 160 H33" fill="none" stroke="#8c8c8c" stroke-width="1" stroke-dasharray="1 1" shape-rendering="crispEdges"/><path d="M27.5 182 H33" fill="none" stroke="#8c8c8c" stroke-width="1" stroke-dasharray="1 1" shape-rendering="crispEdges"/><path d="M27.5 204 H33" fill="none" stroke="#8c8c8c" stroke-width="1" stroke-dasharray="1 1" shape-rendering="crispEdges"/><path d="M27.5 226 H33" fill="none" stroke="#8c8c8c" stroke-width="1" stroke-dasharray="1 1" shape-rendering="crispEdges"/><path d="M44.55 248 H56.05" fill="none" stroke="#8c8c8c" stroke-width="1" stroke-dasharray="1 1" shape-rendering="crispEdges"/><path d="M50.55 270 H56.05" fill="none" stroke="#8c8c8c" stroke-width="1" stroke-dasharray="1 1" shape-rendering="crispEdges"/><path d="M73.6 292 H79.1" fill="none" stroke="#8c8c8c" stroke-width="1" stroke-dasharray="1 1" shape-rendering="crispEdges"/><path d="M96.65 314 H102.15" fill="none" stroke="#8c8c8c" stroke-width="1" stroke-dasharray="1 1" shape-rendering="crispEdges"/><path d="M113.7 336 H125.2" fill="none" stroke="#8c8c8c" stroke-width="1" stroke-dasharray="1 1" shape-rendering="crispEdges"/><path d="M113.7 358 H125.2" fill="none" stroke="#8c8c8c" stroke-width="1" stroke-dasharray="1 1" shape-rendering="crispEdges"/><path d="M113.7 380 H125.2" fill="none" stroke="#8c8c8c" stroke-width="1" stroke-dasharray="1 1" shape-rendering="crispEdges"/><path d="M113.7 402 H125.2" fill="none" stroke="#8c8c8c" stroke-width="1" stroke-dasharray="1 1" shape-rendering="crispEdges"/><path d="M113.7 424 H125.2" fill="none" stroke="#8c8c8c" stroke-width="1" stroke-dasharray="1 1" shape-rendering="crispEdges"/><path d="M113.7 446 H125.2" fill="none" stroke="#8c8c8c" stroke-width="1" stroke-dasharray="1 1" shape-rendering="crispEdges"/><path d="M113.7 468 H125.2" fill="none" stroke="#8c8c8c" stroke-width="1" stroke-dasharray="1 1" shape-rendering="crispEdges"/><path d="M96.65 490 H102.15" fill="none" stroke="#8c8c8c" stroke-width="1" stroke-dasharray="1 1" shape-rendering="crispEdges"/><path d="M119.7 512 H125.2" fill="none" stroke="#8c8c8c" stroke-width="1" stroke-dasharray="1 1" shape-rendering="crispEdges"/><path d="M136.75 534 H148.25" fill="none" stroke="#8c8c8c" stroke-width="1" stroke-dasharray="1 1" shape-rendering="crispEdges"/><path d="M136.75 556 H148.25" fill="none" stroke="#8c8c8c" stroke-width="1" stroke-dasharray="1 1" shape-rendering="crispEdges"/><path d="M113.7 578 H125.2" fill="none" stroke="#8c8c8c" stroke-width="1" stroke-dasharray="1 1" shape-rendering="crispEdges"/><path d="M90.65 600 H102.15" fill="none" stroke="#8c8c8c" stroke-width="1" stroke-dasharray="1 1" shape-rendering="crispEdges"/><path d="M67.6 622 H79.1" fill="none" stroke="#8c8c8c" stroke-width="1" stroke-dasharray="1 1" shape-rendering="crispEdges"/><path d="M67.6 644 H79.1" fill="none" stroke="#8c8c8c" stroke-width="1" stroke-dasharray="1 1" shape-rendering="crispEdges"/><path d="M27.5 666 H33" fill="none" stroke="#8c8c8c" stroke-width="1" stroke-dasharray="1 1" shape-rendering="crispEdges"/><path d="M27.5 688 H33" fill="none" stroke="#8c8c8c" stroke-width="1" stroke-dasharray="1 1" shape-rendering="crispEdges"/><path d="M27.5 710 H33" fill="none" stroke="#8c8c8c" stroke-width="1" stroke-dasharray="1 1" shape-rendering="crispEdges"/><path d="M27.5 732 H33" fill="none" stroke="#8c8c8c" stroke-width="1" stroke-dasharray="1 1" shape-rendering="crispEdges"/><defs><linearGradient id="exg" x1="0" y1="0" x2="0" y2="1"><stop offset="0" stop-color="#ffffff"/><stop offset="0.5" stop-color="#f4f4f4"/><stop offset="0.55" stop-color="#e2e2e2"/><stop offset="1" stop-color="#d2d2d2"/></linearGradient></defs><rect x="16.5" y="133.5" width="10" height="10" rx="1.2" fill="url(#exg)" stroke="#a3a3a3" stroke-width="1"/><path d="M18 138.5 H25 M21.5 135 V142" fill="none" stroke="#33478f" stroke-width="1" shape-rendering="crispEdges"/><rect x="16.5" y="155.5" width="10" height="10" rx="1.2" fill="url(#exg)" stroke="#a3a3a3" stroke-width="1"/><path d="M18 160.5 H25 M21.5 157 V164" fill="none" stroke="#33478f" stroke-width="1" shape-rendering="crispEdges"/><rect x="16.5" y="177.5" width="10" height="10" rx="1.2" fill="url(#exg)" stroke="#a3a3a3" stroke-width="1"/><path d="M18 182.5 H25 M21.5 179 V186" fill="none" stroke="#33478f" stroke-width="1" shape-rendering="crispEdges"/><rect x="16.5" y="199.5" width="10" height="10" rx="1.2" fill="url(#exg)" stroke="#a3a3a3" stroke-width="1"/><path d="M18 204.5 H25 M21.5 201 V208" fill="none" stroke="#33478f" stroke-width="1" shape-rendering="crispEdges"/><rect x="16.5" y="221.5" width="10" height="10" rx="1.2" fill="url(#exg)" stroke="#a3a3a3" stroke-width="1"/><path d="M18 226.5 H25" fill="none" stroke="#33478f" stroke-width="1" shape-rendering="crispEdges"/><rect x="39.55" y="265.5" width="10" height="10" rx="1.2" fill="url(#exg)" stroke="#a3a3a3" stroke-width="1"/><path d="M41.05 270.5 H48.05" fill="none" stroke="#33478f" stroke-width="1" shape-rendering="crispEdges"/><rect x="62.6" y="287.5" width="10" height="10" rx="1.2" fill="url(#exg)" stroke="#a3a3a3" stroke-width="1"/><path d="M64.1 292.5 H71.1" fill="none" stroke="#33478f" stroke-width="1" shape-rendering="crispEdges"/><rect x="85.65" y="309.5" width="10" height="10" rx="1.2" fill="url(#exg)" stroke="#a3a3a3" stroke-width="1"/><path d="M87.15 314.5 H94.15" fill="none" stroke="#33478f" stroke-width="1" shape-rendering="crispEdges"/><rect x="85.65" y="485.5" width="10" height="10" rx="1.2" fill="url(#exg)" stroke="#a3a3a3" stroke-width="1"/><path d="M87.15 490.5 H94.15" fill="none" stroke="#33478f" stroke-width="1" shape-rendering="crispEdges"/><rect x="108.7" y="507.5" width="10" height="10" rx="1.2" fill="url(#exg)" stroke="#a3a3a3" stroke-width="1"/><path d="M110.2 512.5 H117.2" fill="none" stroke="#33478f" stroke-width="1" shape-rendering="crispEdges"/><rect x="16.5" y="661.5" width="10" height="10" rx="1.2" fill="url(#exg)" stroke="#a3a3a3" stroke-width="1"/><path d="M18 666.5 H25 M21.5 663 V670" fill="none" stroke="#33478f" stroke-width="1" shape-rendering="crispEdges"/><rect x="16.5" y="683.5" width="10" height="10" rx="1.2" fill="url(#exg)" stroke="#a3a3a3" stroke-width="1"/><path d="M18 688.5 H25 M21.5 685 V692" fill="none" stroke="#33478f" stroke-width="1" shape-rendering="crispEdges"/><rect x="16.5" y="705.5" width="10" height="10" rx="1.2" fill="url(#exg)" stroke="#a3a3a3" stroke-width="1"/><path d="M18 710.5 H25 M21.5 707 V714" fill="none" stroke="#33478f" stroke-width="1" shape-rendering="crispEdges"/><rect x="16.5" y="727.5" width="10" height="10" rx="1.2" fill="url(#exg)" stroke="#a3a3a3" stroke-width="1"/><path d="M18 732.5 H25 M21.5 729 V736" fill="none" stroke="#33478f" stroke-width="1" shape-rendering="crispEdges"/><path d="M40.67 128 H46.46 L51.5 133.64 V142.33 Q51.5 143.5 50.33 143.5 H40.67 Q39.5 143.5 39.5 142.33 V129.17 Q39.5 128 40.67 128 Z" fill="none" stroke="#000" stroke-width="1.0" stroke-linejoin="round"/><path d="M46.46 128 V132.47 Q46.46 133.64 47.63 133.64 H51.5" fill="none" stroke="#000" stroke-width="1.0" /><path d="M37.67 130.5 H43.46 L48.5 136.14 V145.33 Q48.5 146.5 47.33 146.5 H37.67 Q36.5 146.5 36.5 145.33 V131.67 Q36.5 130.5 37.67 130.5 Z" fill="#fff" stroke="#000" stroke-width="1.0" stroke-linejoin="round"/><path d="M43.46 130.5 V134.97 Q43.46 136.14 44.63 136.14 H48.5" fill="none" stroke="#000" stroke-width="1.0" /><path d="M38.8 138.96 H45.95 M38.8 141.68 H45.95 M38.8 144.37 H45.95" fill="none" stroke="#000" stroke-width="1.0" /><path d="M39.3 153.69 V162.21 A6.25 3.49 0 0 0 51.8 162.21 V153.69" fill="none" stroke="#000" stroke-width="1.0" /><ellipse cx="45.55" cy="153.69" rx="6.25" ry="3.49" fill="none" stroke="#000" stroke-width="1.0"/><path d="M39.3 157.95 A6.25 3.49 0 0 0 51.8 157.95" fill="none" stroke="#000" stroke-width="1.0" /><path d="M36.5 156.14 V164.56 A6.25 3.44 0 0 0 49 164.56 V156.14" fill="#fff" stroke="#000" stroke-width="1.0" /><ellipse cx="42.75" cy="156.14" rx="6.25" ry="3.44" fill="#fff" stroke="#000" stroke-width="1.0"/><path d="M36.5 160.35 A6.25 3.44 0 0 0 49 160.35" fill="none" stroke="#000" stroke-width="1.0" /><circle cx="44.7" cy="180" r="8.4" fill="none" stroke="#000" stroke-width="1.0"/><circle cx="42.9" cy="181.7" r="8.4" fill="#fff" stroke="#000" stroke-width="1.0"/><circle cx="42.71" cy="178.25" r="0.56" fill="#000" stroke="#000" stroke-width="0"/><path d="M41.46 180.89 H43.21 V185.46 M41.4 185.52 H44.4" fill="none" stroke="#000" stroke-width="1.0" /><path d="M45.2 193.8 L51.5 196.87 V203.53 L45.2 206.6 L38.9 203.53 V196.87 Z" fill="none" stroke="#000" stroke-width="1.0" stroke-linejoin="round"/><path d="M38.9 196.87 L45.2 199.94 L51.5 196.87 M45.2 199.94 V206.6" fill="none" stroke="#000" stroke-width="1.0" stroke-linejoin="round"/><path d="M42 196.9 L48.5 200.62 V208.68 L42 212.4 L35.5 208.68 V200.62 Z" fill="#fff" stroke="#000" stroke-width="1.0" stroke-linejoin="round"/><path d="M35.5 200.62 L42 204.34 L48.5 200.62 M42 204.34 V212.4" fill="none" stroke="#000" stroke-width="1.0" stroke-linejoin="round"/><path d="M47.33 221.22 V216.94 Q47.33 215.5 45.89 215.5 H36.04 Q34.6 215.5 34.6 216.94 V231.7 Q34.6 233.14 36.04 233.14 H41.17" fill="none" stroke="#000" stroke-width="1.0" stroke-linecap="round"/><circle cx="48.18" cy="228.42" r="5.46" fill="none" stroke="#000" stroke-width="1.0"/><circle cx="48.18" cy="228.42" r="1.24" fill="none" stroke="#000" stroke-width="0.9"/><path d="M59.92 239.6 H64.69 Q65.45 239.6 66.21 240.42 L67.35 241.23 Q67.99 241.86 68.87 241.86 H73.88 Q75.4 241.86 75.4 243.38 V251.78 Q75.4 253.3 73.88 253.3 H59.92 Q58.4 253.3 58.4 251.78 V241.12 Q58.4 239.6 59.92 239.6 Z" fill="none" stroke="#000" stroke-width="1.0" stroke-linejoin="round"/><rect x="57.6" y="262.8" width="18.6" height="12.3" rx="2.2" fill="none" stroke="#000" stroke-width="1.0"/><path d="M61.3 262.8 V275.1" fill="none" stroke="#000" stroke-width="1.0" /><path d="M72.6 262.8 V275.1" fill="none" stroke="#000" stroke-width="1.0" /><rect x="80.65" y="284.8" width="18.6" height="12.3" rx="2.2" fill="none" stroke="#000" stroke-width="1.0"/><path d="M84.35 284.8 V297.1" fill="none" stroke="#000" stroke-width="1.0" /><rect x="103.7" y="306.8" width="18.6" height="12.3" rx="2.2" fill="none" stroke="#000" stroke-width="1.0"/><path d="M107.4 306.8 V319.1" fill="none" stroke="#000" stroke-width="1.0" /><rect x="126.75" y="328.8" width="18.6" height="12.3" rx="2.2" fill="none" stroke="#000" stroke-width="1.0"/><path d="M126.75 337.6 H145.35" fill="none" stroke="#000" stroke-width="1.0" /><rect x="126.75" y="350.8" width="18.6" height="12.3" rx="2.2" fill="none" stroke="#000" stroke-width="1.0"/><path d="M126.75 359.6 H145.35" fill="none" stroke="#000" stroke-width="1.0" /><rect x="126.75" y="372.8" width="18.6" height="12.3" rx="2.2" fill="none" stroke="#000" stroke-width="1.0"/><path d="M126.75 381.6 H145.35" fill="none" stroke="#000" stroke-width="1.0" /><rect x="126.75" y="394.8" width="18.6" height="12.3" rx="2.2" fill="none" stroke="#000" stroke-width="1.0"/><path d="M126.75 403.6 H145.35" fill="none" stroke="#000" stroke-width="1.0" /><rect x="126.75" y="416.8" width="18.6" height="12.3" rx="2.2" fill="none" stroke="#000" stroke-width="1.0"/><path d="M126.75 425.6 H145.35" fill="none" stroke="#000" stroke-width="1.0" /><rect x="126.75" y="438.8" width="18.6" height="12.3" rx="2.2" fill="none" stroke="#000" stroke-width="1.0"/><path d="M126.75 447.6 H145.35" fill="none" stroke="#000" stroke-width="1.0" /><rect x="126.75" y="460.8" width="18.6" height="12.3" rx="2.2" fill="none" stroke="#000" stroke-width="1.0"/><path d="M126.75 469.6 H145.35" fill="none" stroke="#000" stroke-width="1.0" /><rect x="103.7" y="482.8" width="18.6" height="12.3" rx="2.2" fill="none" stroke="#000" stroke-width="1.0"/><path d="M107.4 482.8 V495.1" fill="none" stroke="#000" stroke-width="1.0" /><rect x="126.75" y="504.8" width="18.6" height="12.3" rx="2.2" fill="none" stroke="#000" stroke-width="1.0"/><path d="M130.45 504.8 V517.1" fill="none" stroke="#000" stroke-width="1.0" /><rect x="149.8" y="526.8" width="18.6" height="12.3" rx="2.2" fill="none" stroke="#000" stroke-width="1.0"/><path d="M149.8 535.6 H168.4" fill="none" stroke="#000" stroke-width="1.0" /><rect x="149.8" y="548.8" width="18.6" height="12.3" rx="2.2" fill="none" stroke="#000" stroke-width="1.0"/><path d="M149.8 557.6 H168.4" fill="none" stroke="#000" stroke-width="1.0" /><rect x="126.75" y="570.8" width="18.6" height="12.3" rx="2.2" fill="none" stroke="#000" stroke-width="1.0"/><path d="M130.45 570.8 V583.1" fill="none" stroke="#000" stroke-width="1.0" /><rect x="103.7" y="592.8" width="18.6" height="12.3" rx="2.2" fill="none" stroke="#000" stroke-width="1.0"/><path d="M107.4 592.8 V605.1" fill="none" stroke="#000" stroke-width="1.0" /><rect x="80.65" y="614.8" width="18.6" height="12.3" rx="2.2" fill="none" stroke="#000" stroke-width="1.0"/><path d="M84.35 614.8 V627.1" fill="none" stroke="#000" stroke-width="1.0" /><rect x="80.65" y="636.8" width="18.6" height="12.3" rx="2.2" fill="none" stroke="#000" stroke-width="1.0"/><path d="M84.35 636.8 V649.1" fill="none" stroke="#000" stroke-width="1.0" /><path d="M36.87 657.6 H41.64 Q42.4 657.6 43.16 658.42 L44.3 659.23 Q44.94 659.86 45.82 659.86 H50.83 Q52.35 659.86 52.35 661.38 V669.78 Q52.35 671.3 50.83 671.3 H36.87 Q35.35 671.3 35.35 669.78 V659.12 Q35.35 657.6 36.87 657.6 Z" fill="none" stroke="#000" stroke-width="1.0" stroke-linejoin="round"/><path d="M37.1 685.85 L41.42 681.7 H51.61 Q52.9 681.7 52.9 682.99 V688.71 Q52.9 690 51.61 690 H41.42 Z" fill="none" stroke="#000" stroke-width="1.0" stroke-linejoin="round"/><path d="M34.8 688.05 L39.12 683.9 H49.71 Q51 683.9 51 685.19 V690.91 Q51 692.2 49.71 692.2 H39.12 Z" fill="#fff" stroke="#000" stroke-width="1.0" stroke-linejoin="round"/><circle cx="39.7" cy="688.05" r="0.88" fill="#000" stroke="#000" stroke-width="0"/><rect x="37.1" y="701.7" width="16" height="12.3" rx="1.6" fill="none" stroke="#000" stroke-width="1.0"/><rect x="34.6" y="703.8" width="16" height="12.3" rx="1.6" fill="#fff" stroke="#000" stroke-width="1.0"/><path d="M34.8 704.7 L42.6 711.9 L50.4 704.7" fill="none" stroke="#000" stroke-width="1.0" /><rect x="37.6" y="721.7" width="14.8" height="15.8" rx="2" fill="none" stroke="#000" stroke-width="1.0"/><rect x="35.4" y="723.4" width="14.8" height="15.8" rx="1.33" fill="#fff" stroke="#000" stroke-width="1.0"/><rect x="37.25" y="725.25" width="7.93" height="7.47" rx="1.64" fill="none" stroke="#000" stroke-width="1.0"/><circle cx="44.62" cy="732.36" r="4.68" fill="#fff" stroke="#000" stroke-width="0"/><circle cx="44.62" cy="732.36" r="3.78" fill="#fff" stroke="#000" stroke-width="1.0"/><path d="M21 1090.5 L15.5 1095.5 L21 1100.5" fill="none" stroke="#505050" stroke-width="1.8" /><path d="M392.5 1090.5 L398 1095.5 L392.5 1100.5" fill="none" stroke="#505050" stroke-width="1.8" /><path d="M418.5 144.5 H431.5 L434 148.3 L431.5 152.5 H418.5 L420 148.5 Z" fill="none" stroke="#000" stroke-width="1.0" stroke-linejoin="round"/><path d="M418.7 144.3 L421 141.6 H433 Q435.3 141.6 435.6 144.2 Q435.8 147 434.2 148.6" fill="none" stroke="#000" stroke-width="1.0" /><path d="M431.6 144.5 L433 141.8" fill="none" stroke="#000" stroke-width="0.8" /><path d="M418.5 473.5 H431.5 L434 477.3 L431.5 481.5 H418.5 L420 477.5 Z" fill="none" stroke="#000" stroke-width="1.0" stroke-linejoin="round"/><path d="M418.7 473.3 L421 470.6 H433 Q435.3 470.6 435.6 473.2 Q435.8 476 434.2 477.6" fill="none" stroke="#000" stroke-width="1.0" /><path d="M431.6 473.5 L433 470.8" fill="none" stroke="#000" stroke-width="0.8" /><circle cx="420" cy="189.9" r="1.7" fill="#000" stroke="#000" stroke-width="0"/><path d="M417.2 196.4 Q417.2 193 418.77 192.2 L420 194.51 L421.23 192.2 Q422.8 193 422.8 196.4 Z" fill="#000" stroke="#000" stroke-width="0" /><circle cx="434" cy="189.9" r="1.7" fill="#000" stroke="#000" stroke-width="0"/><path d="M431.2 196.4 Q431.2 193 432.77 192.2 L434 194.51 L435.23 192.2 Q436.8 193 436.8 196.4 Z" fill="#000" stroke="#000" stroke-width="0" /><circle cx="427" cy="191" r="3.9" fill="#d6dae0" stroke="#000" stroke-width="0"/><circle cx="427" cy="190.8" r="2.9" fill="#000" stroke="#000" stroke-width="0"/><path d="M420.8 202.7 Q420.8 195.1 424.27 194.3 L427 198.92 L429.73 194.3 Q433.2 195.1 433.2 202.7 Z" fill="#000" stroke="#000" stroke-width="0" /><path d="M426.3 194.6 H427.7 L428 195.8 L427.4 200 L427 201 L426.6 200 L426 195.8 Z" fill="#d6dae0" stroke="#000" stroke-width="0" /><path d="M429 231.65 L433.46 234.23 L433.46 239.38 L429 241.95 L424.54 239.38 L424.54 234.23 Z" fill="none" stroke="#000" stroke-width="1.1" stroke-linejoin="round"/><circle cx="429" cy="236.8" r="1.5" fill="#000" stroke="#000" stroke-width="0"/><path d="M424.4 239.65 L428.86 242.23 L428.86 247.38 L424.4 249.95 L419.94 247.38 L419.94 242.23 Z" fill="none" stroke="#000" stroke-width="1.1" stroke-linejoin="round"/><circle cx="424.4" cy="244.8" r="1.5" fill="#000" stroke="#000" stroke-width="0"/><path d="M433.6 239.65 L438.06 242.23 L438.06 247.38 L433.6 249.95 L429.14 247.38 L429.14 242.23 Z" fill="none" stroke="#000" stroke-width="1.1" stroke-linejoin="round"/><circle cx="433.6" cy="244.8" r="1.5" fill="#000" stroke="#000" stroke-width="0"/><circle cx="426.9" cy="287.7" r="7.2" fill="none" stroke="#000" stroke-width="1.0"/><path d="M428.5 287.7 L436.3 287.7 M428.03 288.83 L433.55 294.35 M426.9 289.3 L426.9 297.1 M425.77 288.83 L420.25 294.35 M425.3 287.7 L417.5 287.7 M425.77 286.57 L420.25 281.05 M426.9 286.1 L426.9 278.3 M428.03 286.57 L433.55 281.05 " fill="none" stroke="#000" stroke-width="0.9" /><circle cx="426.9" cy="287.7" r="1.7" fill="#e4e7ec" stroke="#000" stroke-width="1.0"/><path d="M421 328 V326.5 H434 V337" fill="none" stroke="#222" stroke-width="0.9" /><path d="M432.3 337.2 V329.5 Q432.3 328.4 431.2 328.4 H420.2 Q419.2 328.4 419.2 329.5 V343.6 Q419.2 344.6 420.2 344.6 H427.6" fill="none" stroke="#222" stroke-width="1.1" /><path d="M421.2 330.8 H430.2 M421.2 333.4 H430.2 M421.2 336.3 H425" fill="none" stroke="#222" stroke-width="1.0" /><path d="M429.2 338.8 H437 M433.1 338.8 V344.8" fill="none" stroke="#111" stroke-width="1.9" /><rect x="417.5" y="376" width="15" height="15.2" rx="2" fill="none" stroke="#222" stroke-width="1.0"/><path d="M417.8 377 L420.8 373.8 H434 Q435.4 373.8 435.4 375.2 V388 L432.4 390.6" fill="none" stroke="#222" stroke-width="1.0" /><path d="M432.5 376.6 L435.2 374.2" fill="none" stroke="#222" stroke-width="0.9" /><rect x="420.6" y="379.4" width="7" height="6" rx="1.6" fill="none" stroke="#222" stroke-width="1.0"/><rect x="423.4" y="382.2" width="7.6" height="6" rx="1.6" fill="#d8dbe1" stroke="#222" stroke-width="1.0"/><path d="M422.4 418.8 L426.38 421.1 L426.38 425.7 L422.4 428 L418.42 425.7 L418.42 421.1 Z" fill="none" stroke="#222" stroke-width="0.85" stroke-linejoin="round"/><path d="M431.7 423.8 L435.68 426.1 L435.68 430.7 L431.7 433 L427.72 430.7 L427.72 426.1 Z" fill="none" stroke="#222" stroke-width="0.85" stroke-linejoin="round"/><path d="M422.4 428.9 L426.38 431.2 L426.38 435.8 L422.4 438.1 L418.42 435.8 L418.42 431.2 Z" fill="none" stroke="#222" stroke-width="0.85" stroke-linejoin="round"/><path d="M425.79 518 L424.06 520.8 M427.89 518.01 L429.56 520.79 M422.04 524.25 L420.56 526.95 M424.06 524.2 L425.79 527 M429.56 524.21 L427.89 526.99 M431.62 524.22 L433.28 526.98" fill="none" stroke="#2a2a2a" stroke-width="0.9" /><circle cx="426.85" cy="516.3" r="2" fill="none" stroke="#2a2a2a" stroke-width="0.9"/><circle cx="423" cy="522.5" r="2" fill="none" stroke="#2a2a2a" stroke-width="0.9"/><circle cx="430.6" cy="522.5" r="2" fill="none" stroke="#2a2a2a" stroke-width="0.9"/><circle cx="419.6" cy="528.7" r="2" fill="none" stroke="#2a2a2a" stroke-width="0.9"/><circle cx="426.85" cy="528.7" r="2" fill="none" stroke="#2a2a2a" stroke-width="0.9"/><circle cx="434.3" cy="528.7" r="2" fill="none" stroke="#2a2a2a" stroke-width="0.9"/><path d="M427.2 563 H421.8 Q420.5 563 420.5 564.3 V580 Q420.5 581.3 421.8 581.3 H432.4 Q433.7 581.3 433.7 580 V572.3" fill="none" stroke="#333" stroke-width="1.2" /><path d="M434 566.5 L437 566.5 M433.53 567.63 L435.65 569.75 M432.4 568.1 L432.4 571.1 M431.27 567.63 L429.15 569.75 M430.8 566.5 L427.8 566.5 M431.27 565.37 L429.15 563.25 M432.4 564.9 L432.4 561.9 M433.53 565.37 L435.65 563.25 " fill="none" stroke="#222" stroke-width="0.9" /><circle cx="432.4" cy="566.5" r="1.2" fill="none" stroke="#222" stroke-width="0.8"/><circle cx="479.8" cy="107.4" r="6.9" fill="none" stroke="#000" stroke-width="1.3"/><path d="M474.9 112.5 L467.5 119.4" fill="none" stroke="#000" stroke-width="1.4" /><path d="M475.6 107.4 H484 M479.8 103.2 V111.6" fill="none" stroke="#000" stroke-width="1.8" /><circle cx="544.6" cy="107.4" r="6.9" fill="none" stroke="#000" stroke-width="1.3"/><path d="M539.7 112.5 L532.3 119.4" fill="none" stroke="#000" stroke-width="1.4" /><path d="M540.4 107.4 H548.8" fill="none" stroke="#000" stroke-width="1.8" /><path d="M564.2 100.6 h6.6 L564.2 107.2 Z" fill="#000" stroke="#000" stroke-width="0" /><path d="M584.2 100.6 h-6.6 L584.2 107.2 Z" fill="#000" stroke="#000" stroke-width="0" /><path d="M564.2 119.8 h6.6 L564.2 113.2 Z" fill="#000" stroke="#000" stroke-width="0" /><path d="M584.2 119.8 h-6.6 L584.2 113.2 Z" fill="#000" stroke="#000" stroke-width="0" /><path d="M596 107.2 L599.1 115.8 L607.7 114 L605.2 111.6 C608 108.6 612.5 108.8 614 111.5 C615 113.5 615.5 115 615.4 116.8 C617.2 112 616.8 108.5 614 106.2 C610 103.2 604.5 104 601 108.6 Z" fill="#858585" stroke="#000" stroke-width="0" /><path d="M649 107.2 L645.9 115.8 L637.3 114 L639.8 111.6 C637 108.6 632.5 108.8 631 111.5 C630 113.5 629.5 115 629.6 116.8 C627.8 112 628.2 108.5 631 106.2 C635 103.2 640.5 104 644 108.6 Z" fill="#858585" stroke="#000" stroke-width="0" /><path d="M679.03 104.47 A9.3 9.3 0 1 0 680.13 114.13" fill="none" stroke="#000" stroke-width="2.0" /><path d="M682.92 101.99 L682.92 108.15 L676.87 106.96 Z" fill="#000" stroke="#000" stroke-width="0" /><path d="M697.2 117.3 V102 Q697.2 100.4 698.8 100.4 H708 L712.4 105 V117.3 M708 100.4 V105 H712.4" fill="none" stroke="#222" stroke-width="1.4" stroke-linejoin="round"/><path d="M697.2 117 V118.6 Q697.2 120 698.8 120 H710.8 Q712.4 120 712.4 118.6 V117" fill="none" stroke="#222" stroke-width="1.4" /><rect x="693" y="109" width="19.4" height="8.2" rx="0.8" fill="#111" stroke="#000" stroke-width="0"/><text x="702.8" y="116.1" font-family="Liberation Sans, sans-serif" font-weight="700" font-size="8.2" fill="#fff" text-anchor="middle" textLength="16.6" lengthAdjust="spacingAndGlyphs">SVG</text><path d="M730.2 117.3 V102 Q730.2 100.4 731.8 100.4 H741 L745.4 105 V117.3 M741 100.4 V105 H745.4" fill="none" stroke="#222" stroke-width="1.4" stroke-linejoin="round"/><path d="M730.2 117 V118.6 Q730.2 120 731.8 120 H743.8 Q745.4 120 745.4 118.6 V117" fill="none" stroke="#222" stroke-width="1.4" /><rect x="726" y="109" width="19.4" height="8.2" rx="0.8" fill="#111" stroke="#000" stroke-width="0"/><text x="735.8" y="116.1" font-family="Liberation Sans, sans-serif" font-weight="700" font-size="8.2" fill="#fff" text-anchor="middle" textLength="16.6" lengthAdjust="spacingAndGlyphs">PNG</text><rect x="771.2" y="106.2" width="8" height="8" rx="1.2" fill="none" stroke="#111" stroke-width="1.3"/><path d="M764.4 110.2 H769 M767 108.2 L769.2 110.2 L767 112.2 M781.2 110.2 H785.6 M783.6 108.2 L785.8 110.2 L783.6 112.2" fill="none" stroke="#111" stroke-width="1.1" /><path d="M775.2 99.2 V103.8 M773.2 101.8 L775.2 104 L777.2 101.8 M775.2 120.9 V116.6 M773.2 118.6 L775.2 116.4 L777.2 118.6" fill="none" stroke="#111" stroke-width="1.1" /><path d="M807.2 104.9 L800.6 115.2 M808.1 105.2 V114.6 M809 104.9 L815.6 115.2" fill="none" stroke="#111" stroke-width="1.2" /><circle cx="808.1" cy="102.9" r="2.2" fill="none" stroke="#111" stroke-width="1.2"/><circle cx="799.9" cy="117.2" r="2.3" fill="none" stroke="#111" stroke-width="1.2"/><circle cx="808.1" cy="117.2" r="2.3" fill="none" stroke="#111" stroke-width="1.2"/><circle cx="816.4" cy="117.2" r="2.3" fill="none" stroke="#111" stroke-width="1.2"/><rect x="830.14" y="100.14" width="20.81" height="20.61" rx="2.48" fill="#fdfdfd" stroke="#000" stroke-width="1.6875"/><path d="M830.42 103.35 V102.22 Q830.42 99.97 832.67 99.97 H848.42 Q850.67 99.97 850.67 102.22 V103.35 Z" fill="#000" stroke="#000" stroke-width="0" /><path d="M832.67 106.61 H837.17" fill="none" stroke="#000" stroke-width="1.6875" stroke-linecap="round"/><rect x="841" y="105.15" width="7.09" height="2.93" rx="0.3" fill="#fff" stroke="#555" stroke-width="1.0125"/><path d="M832.67 111.56 H837.17" fill="none" stroke="#000" stroke-width="1.6875" stroke-linecap="round"/><rect x="841" y="110.1" width="7.09" height="2.93" rx="0.3" fill="#fff" stroke="#555" stroke-width="1.0125"/><path d="M832.67 116.62 H837.17" fill="none" stroke="#000" stroke-width="1.6875" stroke-linecap="round"/><rect x="841" y="115.16" width="7.09" height="2.93" rx="0.3" fill="#fff" stroke="#555" stroke-width="1.0125"/><path d="M907.8 108.6 H918.8 L913.3 113.4 Z" fill="#111" stroke="#000" stroke-width="0" /><path d="M488.15 179.15 H498.07 L506.55 188.65 V204.75 Q506.55 206.55 504.75 206.55 H488.15 Q486.35 206.55 486.35 204.75 V180.95 Q486.35 179.15 488.15 179.15 Z" fill="none" stroke="#000" stroke-width="1.7" stroke-linejoin="round"/><path d="M498.07 179.15 V186.85 Q498.07 188.65 499.87 188.65 H506.55" fill="none" stroke="#000" stroke-width="1.7" /><path d="M490.21 193.64 H502.25 M490.21 198.29 H502.25 M490.21 202.89 H502.25" fill="none" stroke="#000" stroke-width="1.7" /><path d="M543.9 179.05 L555.65 185.58 V199.72 L543.9 206.25 L532.15 199.72 V185.58 Z" fill="none" stroke="#000" stroke-width="1.7" stroke-linejoin="round"/><path d="M532.15 185.58 L543.9 192.11 L555.65 185.58 M543.9 192.11 V206.25" fill="none" stroke="#000" stroke-width="1.7" stroke-linejoin="round"/><circle cx="496.5" cy="240.4" r="13.95" fill="none" stroke="#000" stroke-width="1.7"/><circle cx="496.19" cy="234.67" r="0.94" fill="#000" stroke="#000" stroke-width="0"/><path d="M494.1 239.05 H497.02 V246.65 M494 246.76 H499" fill="none" stroke="#000" stroke-width="1.563380281690141" /><rect x="529.55" y="231.25" width="28.7" height="18.1" rx="2.6" fill="none" stroke="#000" stroke-width="1.7"/><path d="M535.3 231.25 V249.35" fill="none" stroke="#000" stroke-width="1.7" /><path d="M553 231.25 V249.35" fill="none" stroke="#000" stroke-width="1.7" /><rect x="482.15" y="278.45" width="28.6" height="18.7" rx="2.8" fill="none" stroke="#000" stroke-width="1.7"/><path d="M482.15 291.5 H510.75" fill="none" stroke="#000" stroke-width="1.7" /><rect x="529.45" y="278.45" width="29.2" height="18.7" rx="2.8" fill="none" stroke="#000" stroke-width="1.7"/><path d="M535.1 278.45 V297.15" fill="none" stroke="#000" stroke-width="1.7" /><path d="M484.05 327.54 V342.66 A12.65 6.19 0 0 0 509.35 342.66 V327.54" fill="none" stroke="#000" stroke-width="1.7" /><ellipse cx="496.7" cy="327.54" rx="12.65" ry="6.19" fill="none" stroke="#000" stroke-width="1.7"/><path d="M484.05 335.1 A12.65 6.19 0 0 0 509.35 335.1" fill="none" stroke="#000" stroke-width="1.7" /><path d="M529.45 334.3 L536.78 327.25 H555.25 Q557.45 327.25 557.45 329.45 V339.15 Q557.45 341.35 555.25 341.35 H536.78 Z" fill="none" stroke="#000" stroke-width="1.7" stroke-linejoin="round"/><circle cx="537.78" cy="334.3" r="1.5" fill="#000" stroke="#000" stroke-width="0"/><path d="M485.45 371.15 H492.93 Q494.13 371.15 495.33 372.45 L497.13 373.71 Q498.13 374.71 499.53 374.71 H507.35 Q509.75 374.71 509.75 377.11 V390.35 Q509.75 392.75 507.35 392.75 H485.45 Q483.05 392.75 483.05 390.35 V373.55 Q483.05 371.15 485.45 371.15 Z" fill="none" stroke="#000" stroke-width="1.7" stroke-linejoin="round"/><rect x="529.45" y="368.65" width="29.2" height="28.8" rx="2.6" fill="none" stroke="#000" stroke-width="1.7"/><rect x="533.2" y="372.4" width="15.5" height="14.6" rx="3.2" fill="none" stroke="#000" stroke-width="1.7"/><circle cx="547.6" cy="386.3" r="8.93" fill="#fff" stroke="#000" stroke-width="0"/><circle cx="547.6" cy="386.3" r="7.4" fill="#fff" stroke="#000" stroke-width="1.7"/><path d="M491.02 454.45 H499.69 L507.25 462.92 V476.58 Q507.25 478.35 505.48 478.35 H491.02 Q489.25 478.35 489.25 476.58 V456.22 Q489.25 454.45 491.02 454.45 Z" fill="none" stroke="#000" stroke-width="1.7" stroke-linejoin="round"/><path d="M499.69 454.45 V461.14 Q499.69 462.92 501.46 462.92 H507.25" fill="none" stroke="#000" stroke-width="1.7" /><path d="M486.72 458.05 H495.39 L502.95 466.52 V480.18 Q502.95 481.95 501.18 481.95 H486.72 Q484.95 481.95 484.95 480.18 V459.82 Q484.95 458.05 486.72 458.05 Z" fill="#fff" stroke="#000" stroke-width="1.7" stroke-linejoin="round"/><path d="M495.39 458.05 V464.74 Q495.39 466.52 497.16 466.52 H502.95" fill="none" stroke="#000" stroke-width="1.7" /><path d="M488.34 470.69 H499.17 M488.34 474.79 H499.17 M488.34 478.83 H499.17" fill="none" stroke="#000" stroke-width="1.7" /><path d="M546 454.05 L555.55 458.68 V468.72 L546 473.35 L536.45 468.72 V458.68 Z" fill="none" stroke="#000" stroke-width="1.7" stroke-linejoin="round"/><path d="M536.45 458.68 L546 463.31 L555.55 458.68 M546 463.31 V473.35" fill="none" stroke="#000" stroke-width="1.7" stroke-linejoin="round"/><path d="M540.6 460.35 L550.45 465.49 V476.61 L540.6 481.75 L530.75 476.61 V465.49 Z" fill="#fff" stroke="#000" stroke-width="1.7" stroke-linejoin="round"/><path d="M530.75 465.49 L540.6 470.62 L550.45 465.49 M540.6 470.62 V481.75" fill="none" stroke="#000" stroke-width="1.7" stroke-linejoin="round"/><circle cx="498" cy="513.7" r="12.45" fill="none" stroke="#000" stroke-width="1.7"/><circle cx="494.8" cy="516.9" r="12.45" fill="#fff" stroke="#000" stroke-width="1.7"/><circle cx="494.52" cy="511.75" r="0.84" fill="#000" stroke="#000" stroke-width="0"/><path d="M492.65 515.68 H495.27 V522.52 M492.55 522.61 H497.05" fill="none" stroke="#000" stroke-width="1.404929577464789" /><path d="M548.8 510 V503.55 Q548.8 501.35 546.6 501.35 H531.65 Q529.45 501.35 529.45 503.55 V526 Q529.45 528.2 531.65 528.2 H539.4" fill="none" stroke="#000" stroke-width="1.7" stroke-linecap="round"/><circle cx="550.1" cy="521" r="8.25" fill="none" stroke="#000" stroke-width="1.7"/><circle cx="550.1" cy="521" r="1.9" fill="none" stroke="#000" stroke-width="1.36"/><path d="M488.75 554.91 V568 A9.45 5.35 0 0 0 507.65 568 V554.91" fill="none" stroke="#000" stroke-width="1.7" /><ellipse cx="498.2" cy="554.91" rx="9.45" ry="5.35" fill="none" stroke="#000" stroke-width="1.7"/><path d="M488.75 561.45 A9.45 5.35 0 0 0 507.65 561.45" fill="none" stroke="#000" stroke-width="1.7" /><path d="M484.95 558.41 V571.5 A9.45 5.35 0 0 0 503.85 571.5 V558.41" fill="#fff" stroke="#000" stroke-width="1.7" /><ellipse cx="494.4" cy="558.41" rx="9.45" ry="5.35" fill="#fff" stroke="#000" stroke-width="1.7"/><path d="M484.95 564.95 A9.45 5.35 0 0 0 503.85 564.95" fill="none" stroke="#000" stroke-width="1.7" /><path d="M538.62 549.55 H547.29 L554.85 558.02 V571.88 Q554.85 573.65 553.08 573.65 H538.62 Q536.85 573.65 536.85 571.88 V551.32 Q536.85 549.55 538.62 549.55 Z" fill="none" stroke="#000" stroke-width="1.7" stroke-linejoin="round"/><path d="M547.29 549.55 V556.24 Q547.29 558.02 549.06 558.02 H554.85" fill="none" stroke="#000" stroke-width="1.7" /><path d="M534.02 553.05 H542.69 L550.25 561.52 V575.38 Q550.25 577.15 548.48 577.15 H534.02 Q532.25 577.15 532.25 575.38 V554.82 Q532.25 553.05 534.02 553.05 Z" fill="#fff" stroke="#000" stroke-width="1.7" stroke-linejoin="round"/><path d="M542.69 553.05 V559.74 Q542.69 561.52 544.46 561.52 H550.25" fill="none" stroke="#000" stroke-width="1.7" /><path d="M535.64 565.8 H546.47 M535.64 569.92 H546.47 M535.64 574 H546.47" fill="none" stroke="#000" stroke-width="1.7" /><path d="M485.45 599.15 H492.93 Q494.13 599.15 495.33 600.45 L497.13 601.68 Q498.13 602.68 499.53 602.68 H507.35 Q509.75 602.68 509.75 605.08 V618.15 Q509.75 620.55 507.35 620.55 H485.45 Q483.05 620.55 483.05 618.15 V601.55 Q483.05 599.15 485.45 599.15 Z" fill="none" stroke="#000" stroke-width="1.7" stroke-linejoin="round"/><rect x="534.05" y="596.25" width="22.7" height="23.3" rx="2.5" fill="none" stroke="#000" stroke-width="1.7"/><rect x="530.35" y="599.75" width="22.7" height="23.3" rx="2.05" fill="#fff" stroke="#000" stroke-width="1.7"/><rect x="533.13" y="602.53" width="12.24" height="11.53" rx="2.53" fill="none" stroke="#000" stroke-width="1.7"/><circle cx="544.5" cy="613.51" r="7.37" fill="#fff" stroke="#000" stroke-width="0"/><circle cx="544.5" cy="613.51" r="5.84" fill="#fff" stroke="#000" stroke-width="1.7"/><path d="M489.5 681.4 H499" fill="none" stroke="#000" stroke-width="1.4" /><path d="M489.5 684.8 H508.5" fill="none" stroke="#000" stroke-width="1.6" /><path d="M490.6 689.3 H507.6 V703 H490.6 Z" fill="none" stroke="#000" stroke-width="1.3" stroke-dasharray="1.3 1.5"/><path d="M490 700 L483.2 710.5" fill="none" stroke="#000" stroke-width="1.3" stroke-dasharray="1.3 1.5"/><path d="M538 684.4 H555.7 V698.3 H538 Z" fill="none" stroke="#000" stroke-width="1.3" stroke-dasharray="1.3 1.5"/><path d="M537.5 694 L530.6 705" fill="none" stroke="#000" stroke-width="1.3" stroke-dasharray="1.3 1.5"/></svg>
</body></html>
